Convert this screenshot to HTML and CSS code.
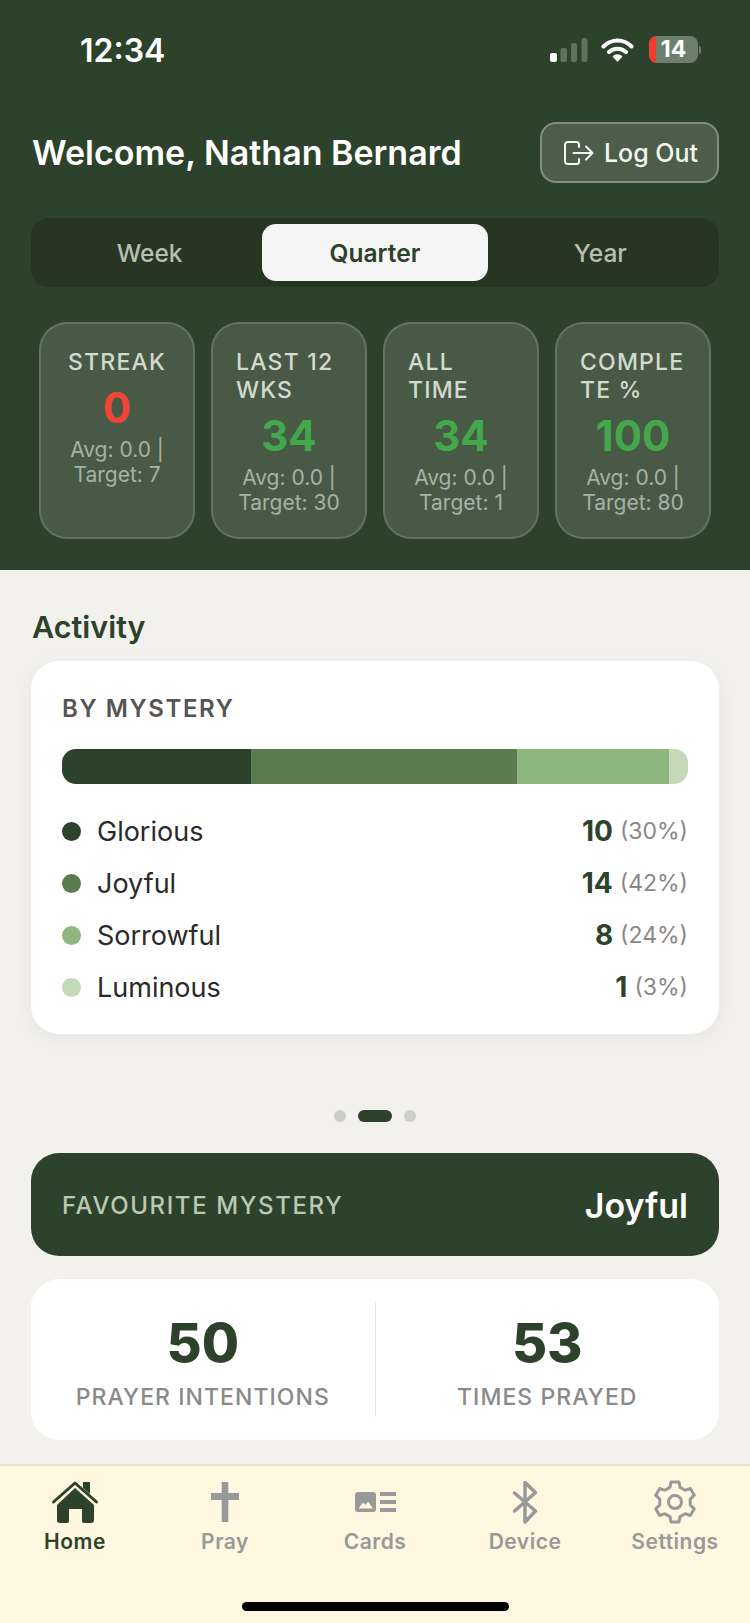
FILE: index.html
```html
<!DOCTYPE html>
<html lang="en">
<head>
  <meta charset="UTF-8">
  <meta name="viewport" content="width=device-width, initial-scale=1.0">
  <title>Home</title>
  <link rel="stylesheet" href="styles.css">
</head>
<body>
  <div class="app">

    <header class="hero">
      <div class="status-bar">
        <span class="status-time">12:34</span>
        <div class="status-icons">
          <svg class="signal" width="38" height="24" viewBox="0 0 38 24">
            <rect x="0" y="15" width="7" height="9" rx="2" fill="#fff"/>
            <rect x="10.5" y="10" width="6.5" height="14" rx="2" fill="#5f725c"/>
            <rect x="21" y="5" width="6" height="19" rx="2" fill="#5f725c"/>
            <rect x="31.5" y="0" width="6" height="24" rx="2" fill="#5f725c"/>
          </svg>
          <svg class="wifi" width="33" height="25" viewBox="0 0 33 25">
            <path d="M2.5 9.5C10.5 1.5 22.5 1.5 30.5 9.5" fill="none" stroke="#fff" stroke-width="4" stroke-linecap="round"/>
            <path d="M8 15C12.500 10.500 20.500 10.500 25 15" fill="none" stroke="#fff" stroke-width="4" stroke-linecap="round"/>
            <path d="M11.500 19.500C14.500 16.500 18.500 16.500 21.500 19.500L16.500 25Z" fill="#fff"/>
          </svg>
          <div class="battery">
            <div class="battery-body">
              <span class="battery-level"></span>
              <span class="battery-text">14</span>
            </div>
            <span class="battery-tip"></span>
          </div>
        </div>
      </div>

      <div class="welcome-row">
        <h1 class="welcome">Welcome, Nathan Bernard</h1>
        <button class="logout">
          <svg width="30" height="24" viewBox="0 0 30 24" fill="none" stroke="#f4f6f2" stroke-width="2" stroke-linecap="round" stroke-linejoin="round">
            <path d="M15 6V3.500C15 2 14 1 12.500 1H4C2.300 1 1 2.300 1 4V20C1 21.700 2.300 23 4 23H12.500C14 23 15 22 15 20.500V18"/>
            <path d="M9.500 12H28.500M22 5.500L28.500 12L22 18.500"/>
          </svg>
          <span>Log Out</span>
        </button>
      </div>

      <div class="range-tabs">
        <span class="range-tab">Week</span>
        <span class="range-tab range-active">Quarter</span>
        <span class="range-tab">Year</span>
      </div>

      <div class="stats">
        <div class="stat">
          <div class="stat-label">STREAK</div>
          <div class="stat-value stat-bad">0</div>
          <div class="stat-sub">Avg: 0.0 | Target: 7</div>
        </div>
        <div class="stat">
          <div class="stat-label">LAST 12 WKS</div>
          <div class="stat-value">34</div>
          <div class="stat-sub">Avg: 0.0 | Target: 30</div>
        </div>
        <div class="stat">
          <div class="stat-label">ALL TIME</div>
          <div class="stat-value">34</div>
          <div class="stat-sub">Avg: 0.0 | Target: 1</div>
        </div>
        <div class="stat">
          <div class="stat-label">COMPLETE %</div>
          <div class="stat-value">100</div>
          <div class="stat-sub">Avg: 0.0 | Target: 80</div>
        </div>
      </div>
    </header>

    <main class="content">
      <h2 class="section-title">Activity</h2>

      <section class="card mystery-card">
        <h3 class="card-title">BY MYSTERY</h3>
        <div class="bar">
          <span class="seg seg-glorious" style="width: 189px"></span>
          <span class="seg seg-joyful" style="width: 266px"></span>
          <span class="seg seg-sorrowful" style="width: 152px"></span>
          <span class="seg seg-luminous" style="width: 19px"></span>
        </div>
        <ul class="legend">
          <li class="legend-row">
            <span class="dot seg-glorious"></span>
            <span class="legend-name">Glorious</span>
            <span class="legend-count">10</span>
            <span class="legend-pct">(30%)</span>
          </li>
          <li class="legend-row">
            <span class="dot seg-joyful"></span>
            <span class="legend-name">Joyful</span>
            <span class="legend-count">14</span>
            <span class="legend-pct">(42%)</span>
          </li>
          <li class="legend-row">
            <span class="dot seg-sorrowful"></span>
            <span class="legend-name">Sorrowful</span>
            <span class="legend-count">8</span>
            <span class="legend-pct">(24%)</span>
          </li>
          <li class="legend-row">
            <span class="dot seg-luminous"></span>
            <span class="legend-name">Luminous</span>
            <span class="legend-count">1</span>
            <span class="legend-pct">(3%)</span>
          </li>
        </ul>
      </section>

      <div class="pager">
        <span class="pager-dot"></span>
        <span class="pager-dot pager-active"></span>
        <span class="pager-dot"></span>
      </div>

      <section class="favourite">
        <span class="favourite-label">FAVOURITE MYSTERY</span>
        <span class="favourite-value">Joyful</span>
      </section>

      <section class="card totals">
        <div class="total">
          <div class="total-value">50</div>
          <div class="total-label">PRAYER INTENTIONS</div>
        </div>
        <div class="total-divider"></div>
        <div class="total">
          <div class="total-value">53</div>
          <div class="total-label">TIMES PRAYED</div>
        </div>
      </section>
    </main>

    <nav class="tabbar">
      <div class="tabs">
        <div class="tab tab-active">
          <svg class="tab-icon" viewBox="0 0 48 48">
            <path d="M32 4H39V16L32 10Z" fill="#2d422b"/>
            <path d="M2.500 24L24 5L45.500 24" fill="none" stroke="#2d422b" stroke-width="3" stroke-linecap="round" stroke-linejoin="round"/>
            <path d="M24 10L43 27V42C43 44 42 45 40 45H33C31.800 45 31 44.200 31 43V31H18V43C18 44.200 17.200 45 16 45H9C7 45 6 44 6 42V27Z" fill="#2d422b"/>
          </svg>
          <span class="tab-label">Home</span>
        </div>
        <div class="tab">
          <svg class="tab-icon" viewBox="0 0 48 48">
            <path d="M20.700 4H27.300V15H38V22H27.300V44H20.700V22H10V15H20.700Z" fill="#999"/>
          </svg>
          <span class="tab-label">Pray</span>
        </div>
        <div class="tab">
          <svg class="tab-icon" viewBox="0 0 48 48">
            <rect x="4" y="14" width="21" height="20" rx="3" fill="#999"/>
            <path d="M7.500 30.500L12 24.500L14.500 27L17 23.500L22 30.500Z" fill="#fff7e0"/>
            <rect x="29" y="14" width="16" height="4" fill="#999"/>
            <rect x="29" y="22" width="16" height="4" fill="#999"/>
            <rect x="29" y="30" width="16" height="4" fill="#999"/>
          </svg>
          <span class="tab-label">Cards</span>
        </div>
        <div class="tab">
          <svg class="tab-icon" viewBox="0 0 48 48" fill="none" stroke="#999" stroke-width="3.500" stroke-linecap="round" stroke-linejoin="round">
            <path d="M13.500 15L34.500 33L24 44V4.500L34.500 14.500L13.500 33"/>
          </svg>
          <span class="tab-label">Device</span>
        </div>
        <div class="tab">
          <svg class="tab-icon" viewBox="0 0 48 48" fill="none" stroke="#999" stroke-width="3" stroke-linejoin="round">
            <path d="M18.950 9.340L20 4H28L29.050 9.340L34.170 12.300L39.300 10.500L43.300 17.200L39.200 21.040V26.960L43.300 30.800L39.300 37.500L34.170 35.700L29.050 38.660L28 44H20L18.950 38.660L13.830 35.700L8.700 37.500L4.700 30.800L8.800 26.960V21.040L4.700 17.200L8.700 10.500L13.830 12.300Z"/>
            <circle cx="24" cy="24" r="6.500"/>
          </svg>
          <span class="tab-label">Settings</span>
        </div>
      </div>
      <div class="home-indicator"></div>
    </nav>

  </div>
</body>
</html>
```

FILE: styles.css
```css
* { box-sizing: border-box; }
html, body { margin: 0; padding: 0; }
body { font-family: Inter, "Liberation Sans", sans-serif; background: #f2f1ed; }
h1, h2, h3, ul { margin: 0; padding: 0; }
ul { list-style: none; }

.app { width: 750px; height: 1623px; display: flex; flex-direction: column; overflow: hidden; }

/* top green area */
.hero { height: 570px; flex: none; background: #2d422b; color: #fff; }

.status-bar { height: 122px; padding: 32px 49px 0 80px; display: flex; justify-content: space-between; align-items: flex-start; }
.status-time { font-size: 32px; font-weight: 600; line-height: 38px; }
.status-icons { display: flex; align-items: center; gap: 13px; margin-top: 4px; }
.battery { display: flex; align-items: center; gap: 1px; margin-left: 2px; }
.battery-body { width: 49px; height: 27px; border-radius: 8px; background: #6e7f6b; display: flex; overflow: hidden; position: relative; justify-content: center; align-items: center; }
.battery-level { position: absolute; left: 0; top: 0; bottom: 0; width: 7px; background: #f03b30; }
.battery-text { font-size: 23px; font-weight: 700; color: #fff; position: relative; line-height: 27px; }
.battery-tip { width: 2px; height: 8px; background: #6e7f6b; border-radius: 0 2px 2px 0; }

.welcome-row { padding: 0 31px 0 32px; display: flex; justify-content: space-between; align-items: center; }
.welcome { font-size: 34px; font-weight: 600; }
.logout { width: 179px; height: 61px; display: flex; align-items: center; justify-content: center; gap: 10px; font-family: inherit; font-size: 25px; font-weight: 500; color: #f4f6f2; background: rgba(255,255,255,0.15); border: 2px solid rgba(255,255,255,0.3); border-radius: 16px; padding: 0 0 0 3px; }

.range-tabs { margin: 35px 31px 0; height: 69px; padding: 6px; background: #263622; border-radius: 18px; display: flex; }
.range-tab { flex: 1; display: flex; align-items: center; justify-content: center; font-size: 24.5px; font-weight: 500; color: #b5c0b0; border-radius: 14px; }
.range-active { background: #f5f5f5; color: #2d422b; font-weight: 600; }

.stats { margin-top: 35px; padding: 0 39px; display: grid; grid-template-columns: repeat(4, 1fr); gap: 16px; }
.stat { height: 217px; padding: 24px 23px 0; display: flex; flex-direction: column; align-items: center; background: rgba(255,255,255,0.13); border: 2px solid rgba(255,255,255,0.15); border-radius: 28px; }
.stat-label { width: fit-content; max-width: 100%; overflow-wrap: anywhere; font-size: 23px; line-height: 28px; font-weight: 500; letter-spacing: 1.2px; color: #d3dace; }
.stat-value { margin-top: 7px; font-size: 42px; line-height: 50px; font-weight: 700; color: #43a84b; }
.stat-bad { color: #f04438; }
.stat-sub { margin-top: 4px; font-size: 21px; line-height: 25px; text-align: center; color: #a6b2a3; }

/* scrolling content */
.content { flex: 1; padding: 37px 31px 0; min-height: 0; }
.section-title { font-size: 30.5px; line-height: 40px; font-weight: 600; color: #2d422b; padding-left: 1px; }

.card { background: #fff; border-radius: 28px; box-shadow: 0 4px 20px rgba(0,0,0,0.05); }
.mystery-card { margin-top: 14px; height: 373px; padding: 33px 31px 0; }
.card-title { font-size: 24px; line-height: 30px; font-weight: 600; letter-spacing: 1.6px; color: #555; }

.bar { margin-top: 25px; height: 35px; border-radius: 14px; overflow: hidden; display: flex; }
.seg { display: block; height: 100%; }
.seg-glorious { background: #2d422b; }
.seg-joyful { background: #5c7c50; }
.seg-sorrowful { background: #8fb67e; }
.seg-luminous { background: #c3d9b8; }

.legend { margin-top: 21px; display: flex; flex-direction: column; }
.legend-row { height: 52px; display: flex; align-items: center; font-size: 27px; color: #2a2a2a; }
.dot { width: 19px; height: 19px; border-radius: 50%; margin-right: 16px; }
.legend-name { flex: 1; }
.legend-count { font-size: 28px; font-weight: 700; color: #2d422b; margin-right: 7px; }
.legend-pct { font-size: 23px; color: #888; }

.pager { margin-top: 76px; height: 12px; display: flex; justify-content: center; align-items: center; gap: 12px; }
.pager-dot { width: 12px; height: 12px; border-radius: 6px; background: #cdcdcd; }
.pager-active { width: 34px; background: #2d422b; }

.favourite { margin-top: 31px; height: 103px; padding: 1px 31px 0; background: #2d422b; border-radius: 28px; display: flex; justify-content: space-between; align-items: center; }
.favourite-label { font-size: 24px; font-weight: 500; letter-spacing: 1.6px; color: #b9c9b3; }
.favourite-value { font-size: 34px; font-weight: 600; color: #fff; }

.totals { margin-top: 23px; height: 161px; padding: 23px 0; display: flex; align-items: stretch; box-shadow: none; }
.total { flex: 1; padding-top: 8px; display: flex; flex-direction: column; align-items: center; }
.total-value { font-size: 54px; line-height: 66px; font-weight: 800; color: #2d422b; }
.total-label { margin-top: 7px; font-size: 23px; line-height: 28px; font-weight: 500; letter-spacing: 1.05px; color: #8a8a8a; }
.total-divider { width: 1px; background: #e8e8e8; }

/* bottom nav */
.tabbar { height: 159px; flex: none; background: #fff7e0; border-top: 2px solid #e8e0c8; }
.tabs { display: grid; grid-template-columns: repeat(5, 1fr); padding-top: 12px; }
.tab { display: flex; flex-direction: column; align-items: center; }
.tab-icon { width: 48px; height: 48px; display: block; }
.tab-label { margin-top: 3px; font-size: 21px; line-height: 26px; font-weight: 600; letter-spacing: 0.5px; color: #999; }
.tab-active .tab-label { color: #2d422b; }
.home-indicator { width: 267px; height: 9px; margin: 47px auto 0; background: #000; border-radius: 5px; }
```
